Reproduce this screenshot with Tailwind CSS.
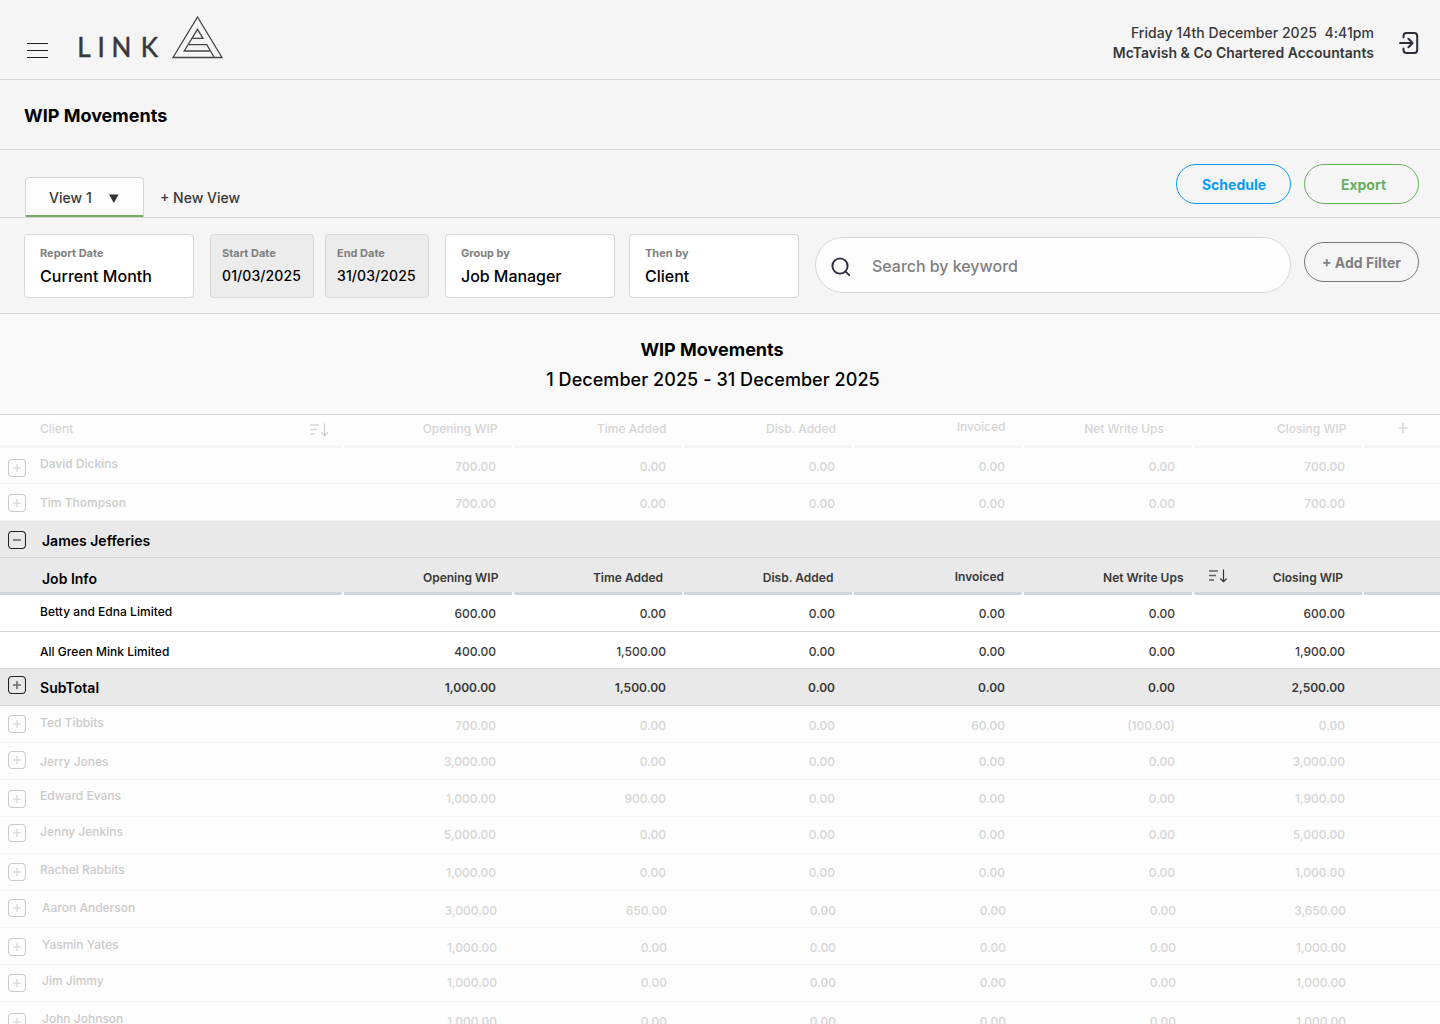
<!DOCTYPE html>
<html lang="en">
<head>
    <meta charset="UTF-8">
    <meta name="viewport" content="width=device-width, initial-scale=1.0">
    <title>WIP Movements</title>
    <script src="https://cdn.jsdelivr.net/npm/@tailwindcss/browser@4"></script>
</head>
<body class="bg-[#fdfdfd] font-['Inter',sans-serif] font-medium text-[#383838]">
    <div class="h-[1024px] overflow-hidden">
        <header class="h-20 bg-[#f5f5f5] border-b border-[#d6d6d6] flex justify-between">
            <div class="flex">
                <button class="ml-[27px] mt-[43px] w-[21px] h-[15px] flex flex-col justify-between" aria-label="Menu">
                    <span class="h-px w-full bg-[#222]"></span>
                    <span class="h-px w-full bg-[#222]"></span>
                    <span class="h-px w-full bg-[#222]"></span>
                </button>
                <svg class="ml-[28px] mt-2" width="150" height="56" viewBox="76 8 150 56" fill="none" stroke="#444" stroke-width="1.3">
                    <text x="77.2 97.4 111.6 140.8" y="57" font-family="Lato" font-size="26" font-weight="400" fill="#383838" stroke="#383838" stroke-width="0.5">LINK</text>
                    <path d="M197.5 17 L222 57.5 H173 Z" />
                    <path d="M214 57 L206.8 44.7 H188.7" />
                    <path d="M209.8 51 H184.2 L197.5 29.3 L203 38.3 H192.5" />
                </svg>
            </div>
            <div class="flex">
                <div class="mt-[23px] text-sm leading-5 text-right">
                    <p class="whitespace-pre tracking-[0.04px]">Friday 14th December 2025  4:41pm</p>
                    <p class="font-semibold tracking-[0.02px]">McTavish &amp; Co Chartered Accountants</p>
                </div>
                <svg class="ml-6 mr-5 mt-[30px]" width="22" height="26" viewBox="0 0 22 26" fill="none" stroke="#2b2d3b" stroke-width="2" stroke-linecap="round" stroke-linejoin="round">
                    <path d="M5.5 7.5 V6 Q5.5 3 8.5 3 H16.2 Q19.2 3 19.2 6 V20 Q19.2 23 16.2 23 H8.5 Q5.5 23 5.5 20 V18.5" />
                    <path d="M2 13 H14 M10.4 8.7 L14.6 13 L10.4 17.3" />
                </svg>
            </div>
        </header>

        <div class="h-[70px] bg-[#f5f5f5] border-b border-[#d6d6d6] px-6 pt-[22px]">
            <h1 class="text-lg font-bold text-black">WIP Movements</h1>
        </div>

        <!-- View tabs -->
        <div class="h-[68px] bg-[#f5f5f5] border-b border-[#d6d6d6] flex justify-between pl-[25px] pr-[21px]">
            <div class="flex items-end text-sm">
                <div class="w-[119px] h-10 bg-[#fdfdfd] border border-b-0 border-[#d6d6d6] rounded-t flex flex-col justify-between">
                    <div class="flex items-center pl-[23px] pt-[10px]">
                        <span class="w-[43px] tracking-[0.06px]">View 1</span>
                        <svg class="ml-[17px]" width="10" height="9" viewBox="0 0 10 9" fill="#333"><path d="M0 0.4 H9.6 L4.8 9 Z" /></svg>
                    </div>
                    <div class="h-0.5 bg-[#6bae5e]"></div>
                </div>
                <button class="ml-4 mb-[9px]">+ New View</button>
            </div>
            <div class="flex gap-[13px] pt-[14px] text-sm font-bold">
                <button class="w-[115px] h-10 rounded-full border border-[#0a9cf5] text-[#0a9cf5] pt-0.5 pl-px">Schedule</button>
                <button class="w-[115px] h-10 rounded-full border border-[#6bae5e] text-[#6bae5e] pt-0.5 pl-1">Export</button>
            </div>
        </div>

        <!-- Filters -->
        <div class="h-24 bg-[#f5f5f5] border-b border-[#d6d6d6] flex pt-4 pl-6 pr-[21px]">
            <div class="w-[170px] h-16 bg-white border border-[#d6d6d6] rounded pl-[15px] pt-[10px]">
                <div class="text-[11px] leading-4 font-bold text-[#808080]">Report Date</div>
                <div class="mt-[3px] text-base leading-6 text-black tracking-[0.05px]">Current Month</div>
            </div>
            <div class="ml-4 w-[104px] h-16 bg-[#ececec] border border-[#d6d6d6] rounded pl-[11px] pt-[10px]">
                <div class="text-[11px] leading-4 font-bold text-[#808080]">Start Date</div>
                <div class="mt-[5px] text-sm leading-5 text-black tracking-[0.1px]">01/03/2025</div>
            </div>
            <div class="ml-[11px] w-[104px] h-16 bg-[#ececec] border border-[#d6d6d6] rounded pl-[11px] pt-[10px]">
                <div class="text-[11px] leading-4 font-bold text-[#808080]">End Date</div>
                <div class="mt-[5px] text-sm leading-5 text-black tracking-[0.1px]">31/03/2025</div>
            </div>
            <div class="ml-4 w-[170px] h-16 bg-white border border-[#d6d6d6] rounded pl-[15px] pt-[10px]">
                <div class="text-[11px] leading-4 font-bold text-[#808080]">Group by</div>
                <div class="mt-[3px] text-base leading-6 text-black tracking-[-0.05px]">Job Manager</div>
            </div>
            <div class="ml-[14px] w-[170px] h-16 bg-white border border-[#d6d6d6] rounded pl-[15px] pt-[10px]">
                <div class="text-[11px] leading-4 font-bold text-[#808080]">Then by</div>
                <div class="mt-[3px] text-base leading-6 text-black">Client</div>
            </div>
            <div class="ml-4 mt-[3px] w-[476px] h-14 bg-[#fdfdfd] border border-[#d6d6d6] rounded-full flex items-center pl-[15px]">
                <svg class="mt-1" width="20" height="20" viewBox="0 0 20 20" fill="none" stroke="#2b2d3b" stroke-width="1.9" stroke-linecap="round">
                    <circle cx="9" cy="9" r="7.6" />
                    <path d="M14.6 14.6 L18.2 18.2" />
                </svg>
                <input type="text" placeholder="Search by keyword" class="ml-[21px] mt-0.5 w-96 text-base tracking-[-0.03px] placeholder:text-[#808080] focus:outline-none">
            </div>
            <button class="ml-[13px] mt-2 w-[115px] h-10 rounded-full border border-[#787878] text-sm font-bold text-[#808080] pt-0.5">+ Add Filter</button>
        </div>

        <div class="h-[101px] bg-[#f9f9f9] border-b border-[#cfd6dc] pt-[21px] pr-4 text-center text-lg text-black leading-[30px]">
            <h2 class="font-bold">WIP Movements</h2>
            <p class="pl-0.5 tracking-[0.06px]">1 December 2025 - 31 December 2025</p>
        </div>

        <div id="wipTable" class="text-xs leading-4"></div>
    </div>

    <script>
        // name / num / icon are the vertical centres of each item inside its row
        const rows = [
            { label: 'David Dickins', values: ['700.00', '0.00', '0.00', '0.00', '0.00', '700.00'], name: 16, num: 19, icon: 20, first: true },
            { label: 'Tim Thompson', values: ['700.00', '0.00', '0.00', '0.00', '0.00', '700.00'], name: 19, num: 20, icon: 19 },
            { type: 'group', label: 'James Jefferies', values: [], name: 20, num: 20, icon: 19, indent: 2 },
            { type: 'jobHead', label: 'Job Info' },
            { type: 'job', label: 'Betty and Edna Limited', values: ['600.00', '0.00', '0.00', '0.00', '0.00', '600.00'], name: 17, num: 19 },
            { type: 'job', label: 'All Green Mink Limited', values: ['400.00', '1,500.00', '0.00', '0.00', '0.00', '1,900.00'], name: 20, num: 20 },
            { type: 'total', label: 'SubTotal', values: ['1,000.00', '1,500.00', '0.00', '0.00', '0.00', '2,500.00'], name: 19, num: 19, icon: 16 },
            { label: 'Ted Tibbits', values: ['700.00', '0.00', '0.00', '60.00', '(100.00)', '0.00'], name: 17, num: 20, icon: 18 },
            { label: 'Jerry Jones', values: ['3,000.00', '0.00', '0.00', '0.00', '0.00', '3,000.00'], name: 19, num: 19, icon: 17 },
            { label: 'Edward Evans', values: ['1,000.00', '900.00', '0.00', '0.00', '0.00', '1,900.00'], name: 16, num: 19, icon: 19 },
            { label: 'Jenny Jenkins', values: ['5,000.00', '0.00', '0.00', '0.00', '0.00', '5,000.00'], name: 15, num: 18, icon: 16 },
            { label: 'Rachel Rabbits', values: ['1,000.00', '0.00', '0.00', '0.00', '0.00', '1,000.00'], name: 16, num: 19, icon: 18 },
            { label: 'Aaron Anderson', values: ['3,000.00', '650.00', '0.00', '0.00', '0.00', '3,650.00'], name: 17, num: 20, icon: 17, indent: 2, shift: 1 },
            { label: 'Yasmin Yates', values: ['1,000.00', '0.00', '0.00', '0.00', '0.00', '1,000.00'], name: 17, num: 20, icon: 19, indent: 2, shift: 1 },
            { label: 'Jim Jimmy', values: ['1,000.00', '0.00', '0.00', '0.00', '0.00', '1,000.00'], name: 16, num: 18, icon: 18, indent: 2, shift: 1 },
            { label: 'John Johnson', values: ['1,000.00', '0.00', '0.00', '0.00', '0.00', '1,000.00'], name: 17, num: 20, icon: 20, indent: 2, shift: 1 }
        ];

        // right: distance between the label and the right edge of its column
        const clientHead = [
            { text: 'Opening WIP', right: 16.6, y: 14 }, { text: 'Time Added', right: 17.6, y: 14 }, { text: 'Disb. Added', right: 18, y: 14 },
            { text: 'Invoiced', right: 18.6, y: 12 }, { text: 'Net Write Ups', right: 30, y: 14 }, { text: 'Closing WIP', right: 17.6, y: 14 }
        ];
        const jobHead = [
            { text: 'Opening WIP', right: 15.6, y: 20 }, { text: 'Time Added', right: 21, y: 20 }, { text: 'Disb. Added', right: 20.6, y: 20 },
            { text: 'Invoiced', right: 20, y: 19 }, { text: 'Net Write Ups', right: 10.5, y: 20 }, { text: 'Closing WIP', right: 21, y: 20 }
        ];
        const right = [18, 18, 19, 19, 19, 19];

        const grid = 'grid grid-cols-[344px_repeat(6,170px)_76px]';
        const styles = {
            faded: { row: 'h-[37px] bg-[#fdfdfd] border-b border-[#f5f5f5]', label: 'text-[#cbcbcb]', num: 'text-[#d5d5d5]', icon: '#cbcbcb' },
            group: { row: 'h-[37px] bg-[#e9e9e9] border-b border-[#d2d4d6]', label: 'text-sm leading-4 font-semibold text-black', num: '', icon: '#222' },
            job: { row: 'h-[37px] bg-white border-b border-[#cfd6dc]', label: 'text-black tracking-[0.03px]', num: 'text-[#383838]' },
            total: { row: 'h-[37px] bg-[#e9e9e9] border-b border-[#cfd6dc]', label: 'text-sm leading-4 font-semibold text-black tracking-[0.05px]', num: 'font-semibold text-[#383838]', icon: '#222' }
        };

        function iconBox(color, minus) {
            return `<svg class="block ml-2" width="18" height="18" viewBox="0 0 18 18" fill="none" stroke="${color}">
                <rect x="0.5" y="0.5" width="17" height="17" rx="3.5" stroke-width="1.1" />
                <path d="${minus ? 'M5 9 H13' : 'M5 9 H13 M9 5 V13'}" stroke-width="1.6" opacity="0.62" />
            </svg>`;
        }

        function sortIcon(cls, color) {
            return `<svg class="${cls}" width="20" height="14" viewBox="0 0 20 14" fill="none" stroke="${color}">
                <path d="M1 2 H10 M1 6.5 H8 M1 11 H6" stroke-width="1.5" opacity="0.75" />
                <path d="M15.5 0.5 V12.5 M12.3 9.5 L15.5 12.7 L18.7 9.5" stroke-width="1.2" />
            </svg>`;
        }

        function headCells(cells, cls) {
            return cells.map(c => `<div class="text-right whitespace-nowrap ${cls}" style="padding-right:${c.right}px;padding-top:${c.y - 8}px">${c.text}</div>`).join('');
        }

        // column underline, broken by a 2px gap at every column edge
        function underline(color) {
            return `<div class="${grid} h-[3px] bg-white">
                ${`<div class="mr-0.5 ${color}"></div>`.repeat(7)}<div class="${color}"></div>
            </div>`;
        }

        function renderRow(r) {
            if (r.type === 'jobHead') {
                return `<div class="${grid} h-[34px] bg-[#e9e9e9]">
                    <div class="pl-[42px] pt-[13px] text-sm leading-4 font-semibold text-black">${r.label}</div>
                    ${headCells(jobHead.slice(0, 5), 'font-semibold')}
                    <div class="flex justify-between pl-[14px]">${sortIcon('mt-[11px]', '#333')}${headCells(jobHead.slice(5), 'font-semibold')}</div>
                </div>${underline('bg-[#cfd6dc]')}`;
            }
            const s = styles[r.type || 'faded'];
            return `<div class="${grid} ${s.row}" ${r.first ? 'style="height:36px"' : ''}>
                <div class="flex items-start">
                    <div class="w-10 shrink-0" style="padding-top:${(r.icon || 9) - 9}px">${r.icon ? iconBox(s.icon, r.type === 'group') : ''}</div>
                    <div class="${s.label}" style="padding-left:${r.indent || 0}px;padding-top:${r.name - 8}px">${r.label}</div>
                </div>
                ${r.values.map((v, i) => `<div class="text-right ${s.num}" style="padding-right:${right[i] - (r.shift || 0)}px;padding-top:${r.num - 8}px">${v}</div>`).join('')}
            </div>`;
        }

        document.getElementById('wipTable').innerHTML = `
            <div class="${grid} h-[30px] text-[#d5d5d5]">
                <div class="flex justify-between pl-10 pr-[15px]"><span class="pt-1.5">Client</span>${sortIcon('mt-2', '#cbcbcb')}</div>
                ${headCells(clientHead, '')}
                <svg class="ml-[34px] mt-2" width="10" height="10" viewBox="0 0 10 10" stroke="#cfcfcf" stroke-width="1.2"><path d="M0 5 H10 M5 0 V10" /></svg>
            </div>
            ${underline('bg-[#f5f5f5]')}
            ${rows.map(renderRow).join('')}`;
    </script>
</body>
</html>
